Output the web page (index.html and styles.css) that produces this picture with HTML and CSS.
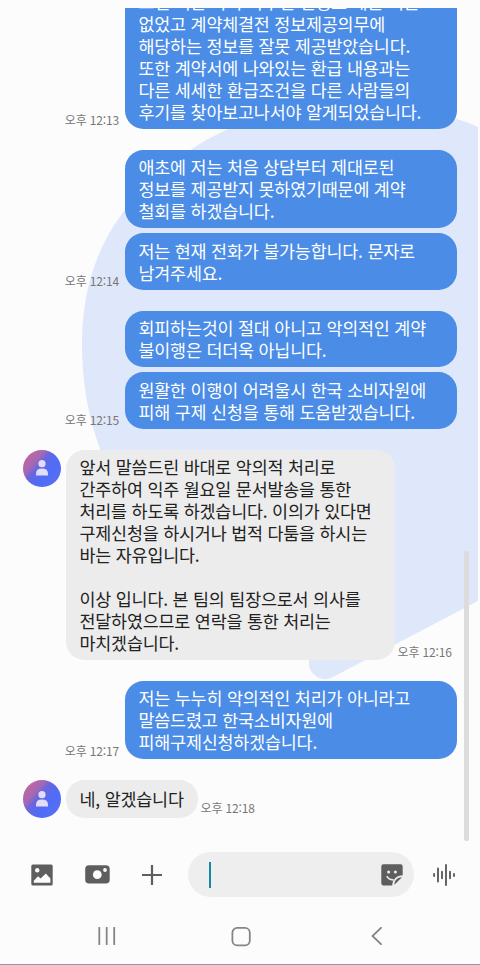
FILE: index.html
```html
<!DOCTYPE html>
<html lang="ko">
<head>
  <meta charset="UTF-8">
  <title>메시지</title>
  <link rel="stylesheet" href="styles.css">
</head>
<body>
  <div class="chat">
    <svg class="chat-bg" width="480" height="840" viewBox="0 8 480 840">
      <path d="M82 345C82 278 103 208 192 149C270 96 390 96 457 119Q470 123 478 127V601L331 678Q324 681 317 677Q309 671 309 665V655C200 640 130 545 100 449Q82 400 82 345Z" fill="#dfe7fa"/>
    </svg>

    <div class="group sent">
      <span class="time">오후 12:13</span>
      <div class="bubbles">
        <p class="bubble">그런 적은 하나 아무런 설명도 해준 적은<br>없었고 계약체결전 정보제공의무에<br>해당하는 정보를 잘못 제공받았습니다.<br>또한 계약서에 나와있는 환급 내용과는<br>다른 세세한 환급조건을 다른 사람들의<br>후기를 찾아보고나서야 알게되었습니다.</p>
      </div>
    </div>

    <div class="group sent">
      <span class="time">오후 12:14</span>
      <div class="bubbles">
        <p class="bubble">애초에 저는 처음 상담부터 제대로된<br>정보를 제공받지 못하였기때문에 계약<br>철회를 하겠습니다.</p>
        <p class="bubble">저는 현재 전화가 불가능합니다. 문자로<br>남겨주세요.</p>
      </div>
    </div>

    <div class="group sent">
      <span class="time">오후 12:15</span>
      <div class="bubbles">
        <p class="bubble">회피하는것이 절대 아니고 악의적인 계약<br>불이행은 더더욱 아닙니다.</p>
        <p class="bubble">원활한 이행이 어려울시 한국 소비자원에<br>피해 구제 신청을 통해 도움받겠습니다.</p>
      </div>
    </div>

    <div class="group received">
      <div class="avatar">
        <svg width="12" height="16" viewBox="0 0 12 16"><circle cx="6" cy="3.7" r="3.6"/><path d="M0 15.5V14Q0 8.6 6 8.6T12 14V15.5Z"/></svg>
      </div>
      <p class="bubble long">앞서 말씀드린 바대로 악의적 처리로<br>간주하여 익주 월요일 문서발송을 통한<br>처리를 하도록 하겠습니다. 이의가 있다면<br>구제신청을 하시거나 법적 다툼을 하시는<br>바는 자유입니다.<br><br>이상 입니다. 본 팀의 팀장으로서 의사를<br>전달하였으므로 연락을 통한 처리는<br>마치겠습니다.</p>
      <span class="time">오후 12:16</span>
    </div>

    <div class="group sent">
      <span class="time">오후 12:17</span>
      <div class="bubbles">
        <p class="bubble">저는 누누히 악의적인 처리가 아니라고<br>말씀드렸고 한국소비자원에<br>피해구제신청하겠습니다.</p>
      </div>
    </div>

    <div class="group received">
      <div class="avatar">
        <svg width="12" height="16" viewBox="0 0 12 16"><circle cx="6" cy="3.7" r="3.6"/><path d="M0 15.5V14Q0 8.6 6 8.6T12 14V15.5Z"/></svg>
      </div>
      <p class="bubble short">네, 알겠습니다</p>
      <span class="time">오후 12:18</span>
    </div>

    <div class="scrollbar"></div>
  </div>

  <div class="composer">
    <div class="tools">
      <!-- gallery -->
      <svg width="22" height="22" viewBox="0 0 22 22">
        <rect x="0.3" y="0.4" width="21.4" height="21" rx="1.5" fill="#5e5e5e"/>
        <circle cx="6.2" cy="6.3" r="2.2" fill="#fcfcfc"/>
        <path d="M2.8 18.8V16.8L7 12.3L9.6 14.6L14.8 9.4L19.4 14.5V18.8Z" fill="#fcfcfc"/>
      </svg>
      <!-- camera -->
      <svg width="25" height="19" viewBox="0 0 25 19">
        <rect x="0.2" y="0.3" width="24.5" height="18.2" rx="3.8" fill="#5e5e5e"/>
        <circle cx="12.3" cy="9.7" r="4.4" fill="#fcfcfc"/>
        <circle cx="20" cy="5" r="1.9" fill="#fcfcfc"/>
      </svg>
      <!-- more -->
      <svg width="20" height="20" viewBox="0 0 20 20">
        <path d="M10 0V20M0 10H20" stroke="#5e5e5e" stroke-width="2.2"/>
      </svg>
    </div>
    <div class="field">
      <span class="caret"></span>
      <!-- sticker -->
      <svg width="22" height="22" viewBox="0 0 22 22">
        <path d="M2.5 0.2H19.5Q21.7 0.2 21.7 2.5V11.3C16 11.5 11.5 15 11.2 21.6H2.5Q0.3 21.6 0.3 19.3V2.5Q0.3 0.2 2.5 0.2Z" fill="#5e5e5e"/>
        <path d="M13.4 20.8C13.2 16.5 16.5 13.4 21 13.3Z" fill="#5e5e5e"/>
        <circle cx="7.6" cy="7.9" r="1.5" fill="#eee"/>
        <circle cx="14.4" cy="7.9" r="1.5" fill="#eee"/>
        <path d="M5.8 12.2Q8 16.2 12.6 15.8" fill="none" stroke="#eee" stroke-width="1.6"/>
      </svg>
    </div>
    <!-- voice -->
    <svg class="voice" width="22" height="22" viewBox="0 0 22 22">
      <path d="M1.1 10V12M5 4.4V17.6M9 7.8V14.2M13 1V21M17 7.8V14.2M21 10V12" stroke="#5e5e5e" stroke-width="1.9" stroke-linecap="round"/>
    </svg>
  </div>

  <div class="navbar">
    <svg width="18" height="18" viewBox="0 0 18 18"><path d="M1.3 0.8V17.2M8.7 0.8V17.2M16.2 0.8V17.2"/></svg>
    <svg class="home" width="20" height="20" viewBox="0 0 20 20"><rect x="1.4" y="0.9" width="17.4" height="17.4" rx="4.8"/></svg>
    <svg width="11" height="18" viewBox="0 0 11 18"><path d="M10 0.8L1.5 9L10 17.2"/></svg>
  </div>
</body>
</html>
```
FILE: styles.css
```css
* {
  box-sizing: border-box;
}

body {
  margin: 0;
  padding-top: 8px;
  width: 480px;
  height: 965px;
  display: flex;
  flex-direction: column;
  background: #fcfcfc;
  border-bottom: 1px solid #999;
  font-family: "Noto Sans CJK KR", sans-serif;
  overflow: hidden;
}

p {
  margin: 0;
}

svg {
  display: block;
}

.chat {
  position: relative;
  height: 840px;
  padding: 0 23.5px 30.5px 23px;
  display: flex;
  flex-direction: column;
  justify-content: flex-end;
  gap: 21px;
  overflow: hidden;
}

.chat-bg {
  position: absolute;
  top: 0;
  left: 0;
}

.group {
  position: relative;
  flex-shrink: 0;
  display: flex;
  align-items: flex-end;
}

.sent {
  justify-content: flex-end;
  gap: 5.5px;
}

.bubbles {
  width: 332px;
  display: flex;
  flex-direction: column;
  gap: 5px;
}

.bubble {
  padding: 6.5px 14px 6px;
  border-radius: 18.5px;
  font-size: 17.4px;
  line-height: 22px;
  letter-spacing: -0.19px;
  white-space: nowrap;
}

.sent .bubble {
  background: #4a8ce6;
  color: #fff;
}

.received .bubble {
  background: #ececec;
  color: #222;
}

.received .long {
  width: 329px;
  padding: 6.5px 14px 5.5px;
}

.received .short {
  height: 37.5px;
  width: 132px;
  padding-top: 5.5px;
  line-height: 25px;
}

.time {
  color: #777;
  font-size: 12px;
  line-height: 17px;
  letter-spacing: -0.15px;
}

.sent .time {
  padding-bottom: 0.5px;
}

.received .time {
  margin-left: 3px;
}

.received .short + .time {
  padding-bottom: 1.5px;
}

.avatar {
  width: 38px;
  height: 37.5px;
  margin-right: 4.5px;
  align-self: flex-start;
  display: flex;
  align-items: center;
  justify-content: center;
  border-radius: 50%;
  background: linear-gradient(130deg, #c0679f 12%, #a468b4 32%, #6a66dd 42%, #4f6cf8 62%, #5b6ff0);
}

.avatar svg {
  fill: #e2dcfa;
}

.scrollbar {
  position: absolute;
  top: 543px;
  right: 11.5px;
  width: 4.5px;
  height: 290px;
  border-radius: 2px;
  background: #dcdcdc;
}

.composer {
  height: 53px;
  padding: 4px 25px 4px 31px;
  display: flex;
  align-items: center;
}

.tools {
  width: 131px;
  display: flex;
  align-items: center;
  justify-content: space-between;
}

.field {
  width: 226.5px;
  height: 45px;
  margin-left: 25.5px;
  padding: 0 11px 0 21px;
  display: flex;
  align-items: center;
  justify-content: space-between;
  border-radius: 23px;
  background: #eee;
}

.caret {
  width: 2px;
  height: 26px;
  background: #1588a8;
}

.voice {
  margin-left: 19px;
}

.navbar {
  flex: 1;
  padding: 8px 98px 0;
  display: flex;
  align-items: flex-start;
  justify-content: space-between;
}

.navbar svg {
  margin-top: 18px;
  fill: none;
  stroke: #858585;
  stroke-width: 1.8;
  stroke-linecap: round;
}

.navbar .home {
  margin-right: 6px;
}
```
